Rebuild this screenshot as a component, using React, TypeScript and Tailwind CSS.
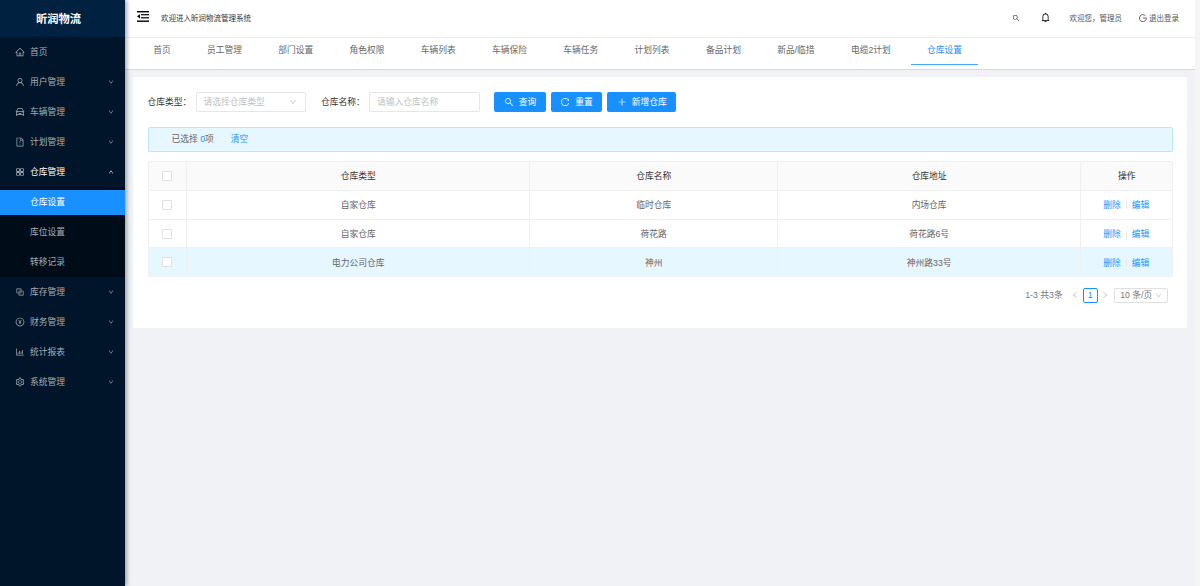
import React from 'react';
import { AiOutlineHome, AiOutlineUser, AiOutlineCar, AiOutlineFileExclamation, AiOutlineAppstore, AiOutlineBlock, AiOutlinePayCircle, AiOutlineBarChart, AiOutlineSetting, AiOutlineDown, AiOutlineUp, AiOutlineSearch, AiOutlineBell, AiOutlineReload, AiOutlinePlus, AiOutlineLeft, AiOutlineRight } from 'react-icons/ai';

type MenuItem = { label: string; icon: any; open?: boolean; noArrow?: boolean };

function Row({ item }: { item: MenuItem }) {
  const Icon = item.icon;
  return (
    <div className="h-[30px] flex items-center pl-[14.5px] pr-[11.5px]">
      <Icon size={10} className={`shrink-0 ${item.open ? 'text-[#d5d8db]' : 'text-[#a6adb4]'}`} />
      <span className={`ml-[5.5px] flex-1 ${item.open ? 'text-white' : 'text-[#a6adb4]'}`}>{item.label}</span>
      {!item.noArrow && (item.open
        ? <AiOutlineUp size={6} className="text-white" />
        : <AiOutlineDown size={6} className="text-[#a6adb4]" />)}
    </div>
  );
}

const tabs = ['首页', '员工管理', '部门设置', '角色权限', '车辆列表', '车辆保险', '车辆任务', '计划列表', '备品计划', '新品/临措', '电缆2计划', '仓库设置'];

const rows = [
  ['自家仓库', '临时仓库', '内场仓库'],
  ['自家仓库', '荷花路', '荷花路6号'],
  ['电力公司仓库', '神州', '神州路33号'],
];

function Checkbox() {
  return <div className="w-[10px] h-[10px] border border-[#e0e0e0] bg-white rounded-[1px] mx-auto" />;
}

function Btn({ icon: Icon, label, w }: { icon: any; label: string; w: string }) {
  return (
    <div className={`h-[20px] ${w} bg-[#1890ff] rounded-[2px] text-white flex items-center justify-center gap-[5px]`}>
      <Icon size={10} />
      <span>{label}</span>
    </div>
  );
}

const cols = 'grid grid-cols-[38.5px_343.3px_247.7px_303.3px_92px]';

export default function App() {
  return (
    <div className="w-[1200px] h-[586px] overflow-hidden flex bg-[#f5f5f5] text-[8.75px] leading-none font-['Liberation_Sans','Noto_Sans_CJK_SC',sans-serif]">
      <aside className="w-[125px] shrink-0 bg-[#001529] shadow-[2px_0_4px_rgba(0,21,41,0.35)] z-10 flex flex-col">
        <div className="h-[37px] bg-[#002140] flex items-center justify-center pr-[8px] pt-[2.5px] text-white font-bold text-[11.25px]">昕润物流</div>
        <Row item={{ label: '首页', icon: AiOutlineHome, noArrow: true }} />
        <Row item={{ label: '用户管理', icon: AiOutlineUser }} />
        <Row item={{ label: '车辆管理', icon: AiOutlineCar }} />
        <Row item={{ label: '计划管理', icon: AiOutlineFileExclamation }} />
        <Row item={{ label: '仓库管理', icon: AiOutlineAppstore, open: true }} />
        <div className="bg-[#000c17]">
          <div className="h-[30px] py-[2.5px]">
            <div className="h-[25px] bg-[#1890ff] text-white flex items-center pl-[30px]">仓库设置</div>
          </div>
          <div className="h-[30px] text-[#a6adb4] flex items-center pl-[30px]">库位设置</div>
          <div className="h-[30px] text-[#a6adb4] flex items-center pl-[30px]">转移记录</div>
        </div>
        <Row item={{ label: '库存管理', icon: AiOutlineBlock }} />
        <Row item={{ label: '财务管理', icon: AiOutlinePayCircle }} />
        <Row item={{ label: '统计报表', icon: AiOutlineBarChart }} />
        <Row item={{ label: '系统管理', icon: AiOutlineSetting }} />
      </aside>
      <div className="w-[1070px] shrink-0 flex flex-col bg-[#f0f2f5]">
        <header className="h-[37.5px] bg-white border-b border-[#eeeeee] flex items-center pl-[12px] pr-[16px] text-[7.5px] text-[#555]">
          <svg width="12" height="11" viewBox="0 0 12 11" className="text-black shrink-0 -mt-[3px]" fill="currentColor">
            <rect x="0" y="0" width="12" height="1.4" />
            <rect x="4" y="3.1" width="8" height="1.2" />
            <rect x="4" y="6.2" width="8" height="1.2" />
            <rect x="0" y="9.5" width="12" height="1.4" />
            <path d="M0 5.3 L3 3.2 V7.4 Z" />
          </svg>
          <span className="ml-[12px] flex-1 text-[#333]">欢迎进入昕润物流管理系统</span>
          <AiOutlineSearch size={8} className="mr-[20px] text-[#222]" />
          <AiOutlineBell size={11} className="text-black mr-[19px] -mt-[2px]" />
          <span className="mr-[17px]">欢迎您，管理员</span>
          <span className="flex items-center gap-[2px]">
            <svg width="8" height="8" viewBox="0 0 16 16" fill="none" stroke="currentColor" strokeWidth="1.8">
              <path d="M13.2 3.8 A7 7 0 1 0 14.8 8 H8" />
            </svg>
            退出登录
          </span>
        </header>
        <nav className="h-[32px] bg-white border-b border-[#d9d9d9] flex items-start pl-[10px] text-[#666]">
          {tabs.map((t, i) => (
            <div key={t} className={`h-[27px] px-[15.6px] mx-[2.55px] flex items-center border-b ${i === tabs.length - 1 ? 'text-[#1890ff] border-[#40a9ff]' : 'border-transparent'}`}>{t}</div>
          ))}
        </nav>
        <main className="mt-[7.5px] ml-[7.5px] mr-[8px] h-[251px] bg-white px-[15px] pt-[15px] text-[#666]">
          <div className="flex items-center h-[20px]">
            <span className="w-[48px] text-[#333]">仓库类型：</span>
            <div className="w-[110px] h-[20px] border border-[#e6e6e6] rounded-[2px] flex items-center justify-between pl-[7px] pr-[7.5px] text-[#bfbfbf]">
              <span>请选择仓库类型</span>
              <AiOutlineDown size={8} />
            </div>
            <span className="ml-[15.5px] w-[48px] text-[#333]">仓库名称：</span>
            <div className="w-[110.7px] h-[20px] border border-[#e6e6e6] rounded-[2px] flex items-center px-[7px] text-[#bfbfbf]">请输入仓库名称</div>
            <div className="ml-[14.6px] flex gap-[5px]">
              <Btn icon={AiOutlineSearch} label="查询" w="w-[51.5px]" />
              <Btn icon={AiOutlineReload} label="重置" w="w-[51.5px]" />
              <Btn icon={AiOutlinePlus} label="新增仓库" w="w-[68.75px]" />
            </div>
          </div>
          <div className="mt-[15px] w-[1025px] h-[25px] bg-[#e6f7ff] border border-[#bae7ff] rounded-[2px] flex items-center pl-[23px]">
            <span className="text-[#666]">已选择 <span className="text-[#1890ff]">0</span>项</span>
            <span className="ml-[17px] text-[#1890ff]">清空</span>
          </div>
          <div className="mt-[9px] w-[1025px] border-t border-l border-[#f0f0f0] rounded-t-[2px]">
            <div className={`${cols} h-[29px] bg-[#fafafa] border-b border-[#f0f0f0] text-[#333]`}>
              <div className="border-r border-[#f0f0f0] flex items-center"><Checkbox /></div>
              {['仓库类型', '仓库名称', '仓库地址', '操作'].map(h => (
                <div key={h} className="border-r border-[#f0f0f0] flex items-center justify-center">{h}</div>
              ))}
            </div>
            {rows.map((r, i) => (
              <div key={i} className={`${cols} h-[28.7px] border-b border-[#f0f0f0] ${i === 2 ? 'bg-[#e6f7ff]' : 'bg-white'}`}>
                <div className="border-r border-[#f0f0f0] flex items-center"><Checkbox /></div>
                {r.map((c, j) => (
                  <div key={j} className="border-r border-[#f0f0f0] flex items-center justify-center pt-[1.5px]">{c}</div>
                ))}
                <div className="border-r border-[#f0f0f0] flex items-center justify-center pr-[1px] pt-[1.5px] text-[#1890ff]">
                  <span>删除</span>
                  <span className="w-px h-[7px] bg-[#e8e8e8] mx-[5px]" />
                  <span>编辑</span>
                </div>
              </div>
            ))}
          </div>
          <div className="mt-[10.5px] flex items-center justify-end pr-[4.3px] text-[#777]">
            <span>1-3 共3条</span>
            <span className="ml-[8.5px] w-[8px] text-[#bbb]"><AiOutlineLeft size={8} /></span>
            <div className="ml-[3.5px] w-[15px] h-[15px] border border-[#1890ff] rounded-[2px] text-[#1890ff] flex items-center justify-center">1</div>
            <span className="ml-[3px] w-[8px] text-[#bbb]"><AiOutlineRight size={8} /></span>
            <div className="ml-[5px] w-[54px] h-[15px] border border-[#e0e0e0] rounded-[2px] flex items-center justify-between pl-[5.5px] pr-[4.5px]">
              <span>10 条/页</span>
              <AiOutlineDown size={7} className="text-[#bbb]" />
            </div>
          </div>
        </main>
      </div>
    </div>
  );
}
